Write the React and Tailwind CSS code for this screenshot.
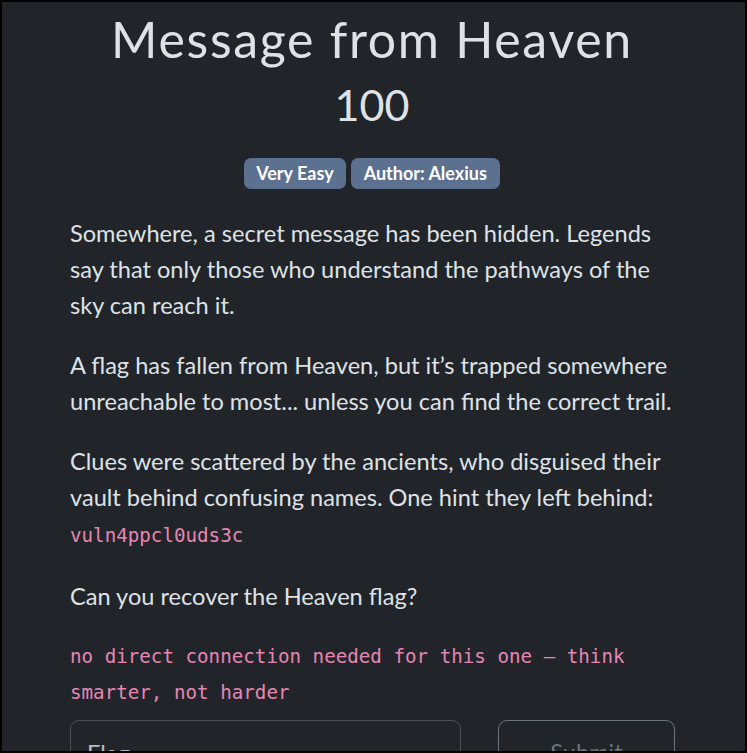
import React from 'react';

const lato = "font-['Lato','Noto_Sans',sans-serif]";
const mono = "font-['DejaVu_Sans_Mono','Liberation_Mono',monospace]";

export default function App() {
    return (
        <div className={`w-[747px] h-[753px] overflow-hidden border-2 border-black bg-[#212529] text-[#dee2e6] ${lato}`}>
            <div className="pl-[68px] pr-[67px]">
                {/* Header */}
                <div className="pr-[4px]">
                    <h3 className="mt-[7px] text-center text-[50px] leading-[1.2] font-normal tracking-[1.7px]">
                        Message from Heaven
                    </h3>
                    <h4 className="mt-[10px] text-center text-[43px] leading-[1.2] font-normal">100</h4>

                    <div className="mt-[27px] flex justify-center gap-[5px]">
                        <span className="h-[31px] px-[12px] flex items-center rounded-[7px] bg-[#5c708f] text-white text-[18px] font-bold">
                            Very Easy
                        </span>
                        <span className="h-[31px] px-[13px] flex items-center rounded-[7px] bg-[#5c708f] text-white text-[18px] font-bold">
                            Author: Alexius
                        </span>
                    </div>
                </div>

                {/* Description */}
                <div className="mt-[26px] text-[23.6px] leading-[36px]">
                    <p className="mb-[24px]">
                        Somewhere, a secret message has been hidden. Legends say that only those who understand the pathways of the sky can reach it.
                    </p>
                    <p className="mb-[24px]">
                        A flag has fallen from Heaven, but it’s trapped somewhere unreachable to most... unless you can find the correct trail.
                    </p>
                    <p className="mb-[23px]">
                        Clues were scattered by the ancients, who disguised their vault behind confusing names. One hint they left behind:
                        <br />
                        <code className={`${mono} text-[19.2px] text-[#e685b5] leading-[38px]`}>vuln4ppcl0uds3c</code>
                    </p>
                    <p className="mb-[25px]">Can you recover the Heaven flag?</p>
                    <p className={`${mono} text-[19.2px] text-[#e685b5]`}>
                        no direct connection needed for this one — think smarter, not harder
                    </p>
                </div>

                {/* Flag form */}
                <div className="mt-[9px] flex gap-[37px]">
                    <input
                        className="w-[391px] h-[66px] rounded-[9px] border border-[#495057] bg-transparent px-[16px] text-[23.6px] placeholder-[#b8bcc0] outline-none"
                        placeholder="Flag"
                    />
                    <button className="w-[177px] h-[66px] rounded-[9px] border border-[#6c757d] text-[23.6px] text-[#6c757d]">
                        Submit
                    </button>
                </div>
            </div>
        </div>
    );
}
